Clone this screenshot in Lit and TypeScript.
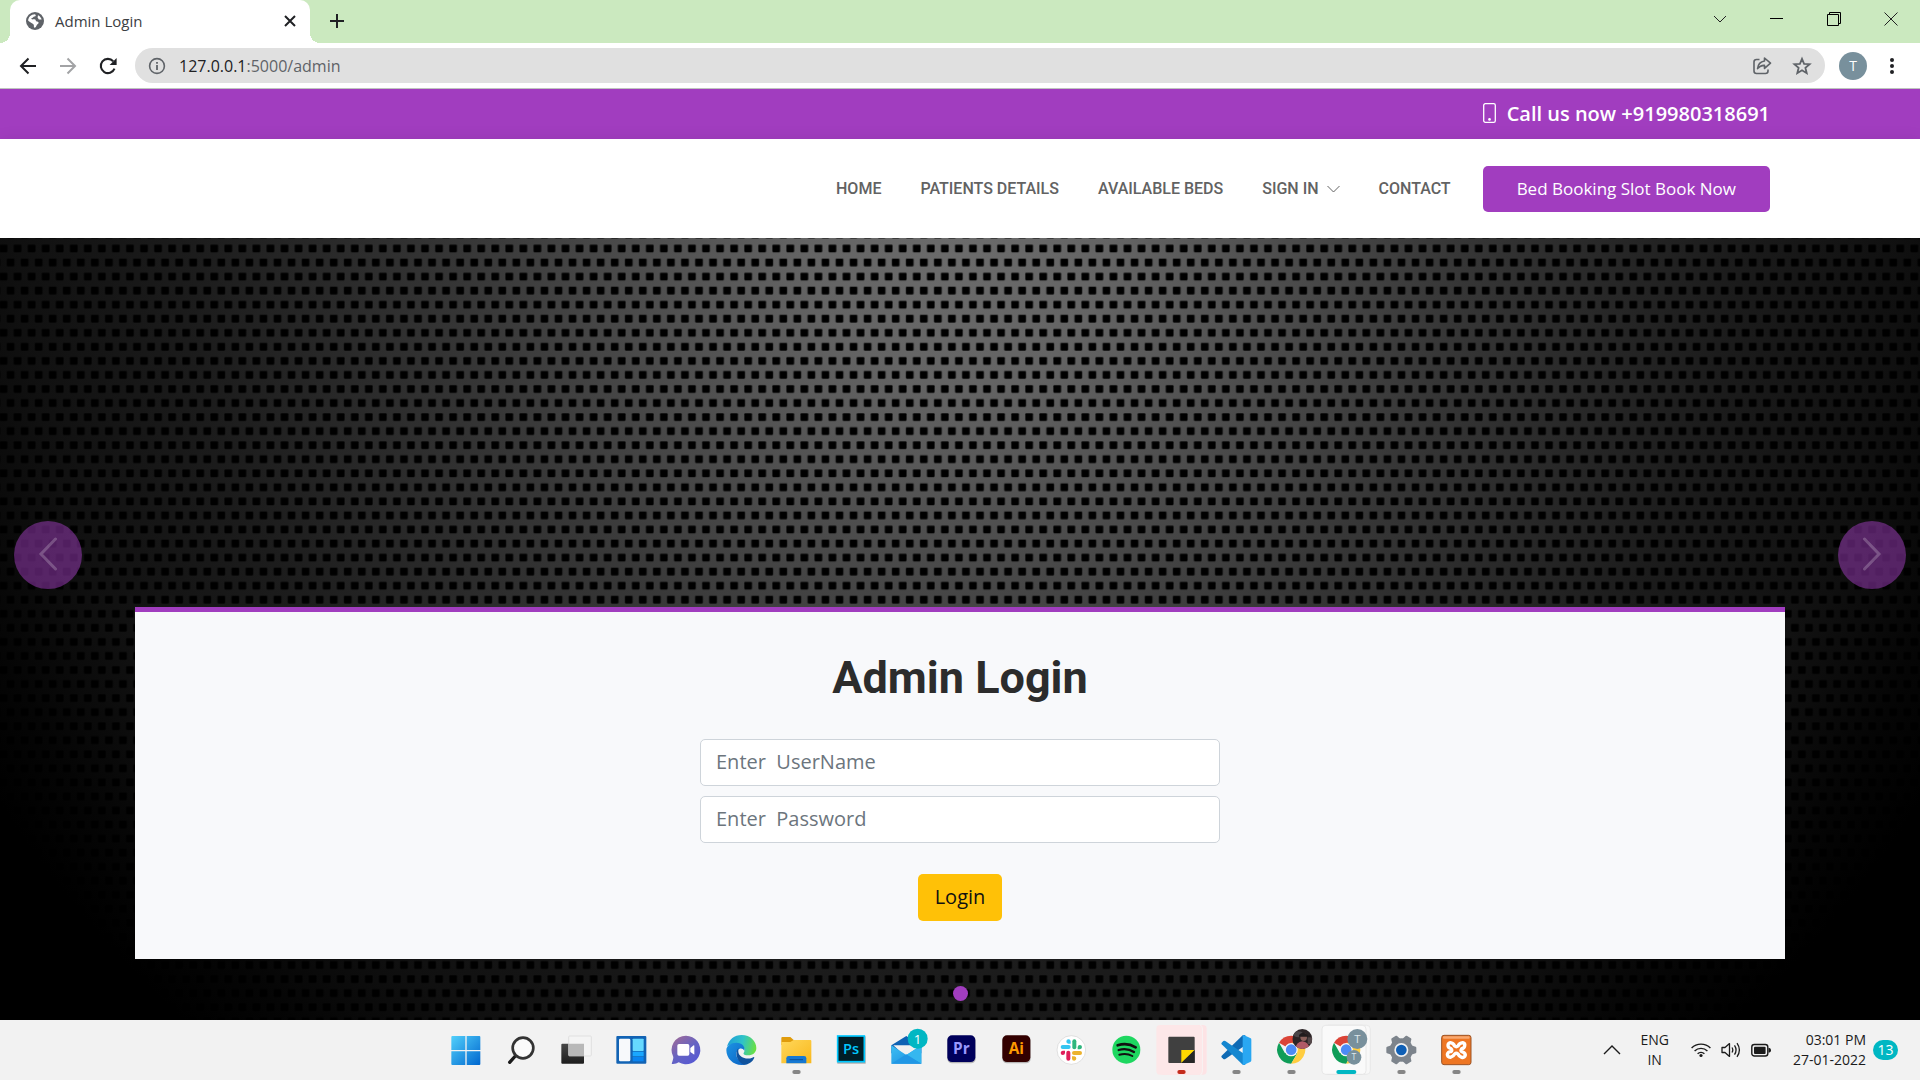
import { LitElement, html, css, svg, nothing } from "lit";
import { customElement, property } from "lit/decorators.js";

/* ---------- Browser chrome ---------- */

@customElement("browser-chrome")
class BrowserChrome extends LitElement {
  static styles = css`
    :host {
      display: block;
      font-family: "Open Sans", "Noto Sans", sans-serif;
      background: #fff;
      border-bottom: 1px solid #bfc3bf;
    }
    button {
      border: 0;
      padding: 0;
      background: none;
      display: grid;
      place-items: center;
      font: inherit;
    }
    svg {
      display: block;
    }
    .strip {
      display: flex;
      height: 43px;
      background: #cbe9bf;
      padding: 0 1px 0 10px;
    }
    .tab {
      position: relative;
      box-sizing: border-box;
      display: flex;
      align-items: center;
      width: 300px;
      padding: 0 11px 2px 16px;
      background: #fff;
      border-radius: 10px 10px 0 0;
      font-size: 15px;
      color: #3c4043;
    }
    .tab::before,
    .tab::after {
      content: "";
      position: absolute;
      bottom: 0;
      width: 10px;
      height: 10px;
    }
    .tab::before {
      left: -10px;
      background: radial-gradient(circle at 0 0, transparent 10px, #fff 10px);
    }
    .tab::after {
      right: -10px;
      background: radial-gradient(circle at 100% 0, transparent 10px, #fff 10px);
    }
    .title {
      flex: 1;
      padding-left: 11px;
    }
    .new {
      width: 54px;
      padding-bottom: 1px;
    }
    .window {
      display: flex;
      margin-left: auto;
    }
    .window button {
      width: 57px;
      height: 37px;
    }
    .toolbar {
      display: flex;
      align-items: center;
      height: 45px;
      padding: 0 13px 0 8px;
    }
    .nav {
      width: 40px;
      height: 40px;
    }
    .address {
      flex: 1;
      display: flex;
      align-items: center;
      height: 35px;
      margin: 0 14px 0 7px;
      padding: 0 12px;
      border-radius: 18px;
      background: #e0e0e0;
      font-size: 16px;
      color: #5f6368;
    }
    .address .url {
      flex: 1;
      padding-left: 12px;
    }
    .host {
      color: #202124;
    }
    .address button {
      width: 22px;
      margin-left: 18px;
    }
    .avatar {
      width: 28px;
      height: 28px;
      border-radius: 50%;
      background: #78909c;
      color: #fff;
      font-size: 14px;
    }
    .menu {
      width: 30px;
      margin-left: 10px;
    }
  `;

  render() {
    return html`
      <div class="strip">
        <div class="tab">
          <svg width="18" height="18" viewBox="0 0 18 18">
            <circle cx="9" cy="9" r="9" fill="#5f6368" />
            <path
              d="M9 2.2C10.2 3.200 10 4.300 8.400 4.500C7 4.700 7.400 6 6 6.100C5 6.200 5.200 7.300 6.200 7.400C8 7.300 9.600 7.200 9.800 8.600C10 10 12.600 9.200 12.600 10.800C12.600 12 11.200 11.900 10.700 13.200C10.300 14.300 9.600 15.700 8.400 15.700C7.400 15.300 8.300 13.500 7.600 12.600C6.800 11.500 4.600 10.800 2.200 8.800C2 5.400 5 2.300 9 2.200Z"
              fill="#fff"
            />
            <path d="M12 3.200C14 4.200 15.200 5.800 15.600 7.600L12.800 7.400L11.600 5.400Z" fill="#fff" />
          </svg>
          <span class="title">Admin Login</span>
          <button aria-label="Close tab">
            <svg width="18" height="18" viewBox="0 0 18 18" stroke="#202124" stroke-width="2">
              <path d="M4 4L14 14M14 4L4 14" />
            </svg>
          </button>
        </div>
        <button class="new" aria-label="New tab">
          <svg width="16" height="16" viewBox="0 0 16 16" stroke="#202124" stroke-width="2">
            <path d="M8 1V15M1 8H15" />
          </svg>
        </button>
        <div class="window">
          <button aria-label="Search tabs">
            <svg width="14" height="14" viewBox="0 0 14 14" fill="none" stroke="#222">
              <path d="M1 4L7 10L13 4" />
            </svg>
          </button>
          <button aria-label="Minimize">
            <svg width="14" height="14" viewBox="0 0 14 14" stroke="#000"><path d="M0 6.5H13" /></svg>
          </button>
          <button aria-label="Restore">
            <svg width="14" height="14" viewBox="0 0 14 14" fill="none" stroke="#000">
              <path d="M.5 2.5H11.5V13.5H.5ZM2.5 2.5V.5H13.5V11.5H11.5" />
            </svg>
          </button>
          <button aria-label="Close">
            <svg width="14" height="14" viewBox="0 0 14 14" stroke="#222">
              <path d="M.5 .5L13.5 13.5M13.5 .5L.5 13.5" />
            </svg>
          </button>
        </div>
      </div>
      <div class="toolbar">
        <button class="nav" aria-label="Back">
          <svg width="18" height="18" viewBox="0 0 18 18" fill="none" stroke="#202124" stroke-width="2">
            <path d="M17 9H2M9.5 1.5L2 9L9.5 16.5" />
          </svg>
        </button>
        <button class="nav" aria-label="Forward">
          <svg width="18" height="18" viewBox="0 0 18 18" fill="none" stroke="#a2a3a5" stroke-width="2">
            <path d="M1 9H16M8.5 1.5L16 9L8.5 16.5" />
          </svg>
        </button>
        <button class="nav" aria-label="Reload">
          <svg width="18" height="18" viewBox="0 0 18 18">
            <path d="M15.5 11.6A7.1 7.1 0 1 1 14.2 4.2" fill="none" stroke="#202124" stroke-width="2.1" />
            <path d="M17.6 1V8H10.6Z" fill="#202124" />
          </svg>
        </button>
        <div class="address">
          <svg width="20" height="20" viewBox="0 0 20 20">
            <circle cx="10" cy="10" r="7.4" fill="none" stroke="#5f6368" stroke-width="1.6" />
            <path d="M10 9V14M10 6V7.8" stroke="#5f6368" stroke-width="1.8" />
          </svg>
          <span class="url"><span class="host">127.0.0.1</span>:5000/admin</span>
          <button aria-label="Share">
            <svg width="20" height="20" viewBox="0 0 20 20" fill="none" stroke="#5f6368" stroke-width="1.6" stroke-linejoin="round">
              <path d="M7.5 3.5H4.5Q2 3.5 2 6V15Q2 17.5 4.5 17.5H13.5Q16 17.5 16 15V13.5" />
              <path d="M12.5 2L18.5 7.2L12.5 12.4V9.4C9.5 9.2 7.4 10.4 5.6 12.6C6 8.4 8.4 5.6 12.5 5Z" />
            </svg>
          </button>
          <button aria-label="Bookmark this page">
            <svg width="20" height="20" viewBox="0 0 20 20" fill="none" stroke="#5f6368" stroke-width="1.8">
              <path d="M10 2.8L12.1 7.8L17.6 8.2L13.4 11.8L14.7 17.2L10 14.3L5.3 17.2L6.6 11.8L2.4 8.2L7.9 7.8Z" />
            </svg>
          </button>
        </div>
        <button class="avatar" aria-label="Profile">T</button>
        <button class="menu" aria-label="Menu">
          <svg width="6" height="18" viewBox="0 0 6 18" fill="#202124">
            <circle cx="3" cy="3" r="2" /><circle cx="3" cy="9" r="2" /><circle cx="3" cy="15" r="2" />
          </svg>
        </button>
      </div>
    `;
  }
}

/* ---------- Hospital site ---------- */

@customElement("site-header")
class SiteHeader extends LitElement {
  static styles = css`
    :host {
      display: block;
      font-family: "Open Sans", sans-serif;
    }
    svg {
      display: block;
    }
    .topbar {
      box-sizing: border-box;
      display: flex;
      align-items: center;
      justify-content: flex-end;
      gap: 11px;
      height: 50px;
      padding: 0 150px 2px;
      background: #a13dbf;
      color: #fff;
      font-size: 20px;
      font-weight: 600;
    }
    .bar {
      position: relative;
      display: flex;
      align-items: center;
      justify-content: flex-end;
      gap: 32px;
      height: 99px;
      padding: 0 150px;
      background: #fff;
      box-shadow: 0 0 15px rgba(0, 0, 0, 0.08);
    }
    nav {
      display: flex;
      gap: 39px;
      font-family: Roboto, sans-serif;
      font-size: 16px;
      font-weight: 500;
    }
    nav a {
      display: flex;
      align-items: center;
      gap: 8px;
      color: #626262;
      text-decoration: none;
    }
    .book {
      padding: 0 34px;
      border-radius: 5px;
      background: #a13dbf;
      color: #fff;
      font-size: 17px;
      line-height: 46px;
      text-decoration: none;
    }
  `;

  render() {
    const links = ["HOME", "PATIENTS DETAILS", "AVAILABLE BEDS", "SIGN IN", "CONTACT"];
    return html`
      <div class="topbar">
        <svg width="13" height="20" viewBox="0 0 13 20">
          <rect x=".7" y=".7" width="11.6" height="18.6" rx="1.6" fill="none" stroke="#fff" stroke-width="1.3" />
          <circle cx="6.5" cy="16.4" r="1.3" fill="#fff" />
        </svg>
        <span>Call us now +919980318691</span>
      </div>
      <div class="bar">
        <nav>
          ${links.map(
            (label) => html`<a href="#"
              >${label}${label === "SIGN IN"
                ? html`<svg width="13" height="8" viewBox="0 0 13 8" fill="none" stroke="#626262">
                    <path d="M.5 1L6.5 7L12.5 1" />
                  </svg>`
                : nothing}</a
            >`
          )}
        </nav>
        <a class="book" href="#">Bed Booking Slot Book Now</a>
      </div>
    `;
  }
}

@customElement("login-hero")
class LoginHero extends LitElement {
  static styles = css`
    :host {
      position: relative;
      display: flex;
      flex-direction: column;
      justify-content: flex-end;
      font-family: "Open Sans", sans-serif;
      background: radial-gradient(
        57% 134% at 50% 0,
        #6b6b6b 0,
        #646464 14%,
        #4c4c4c 30%,
        #373737 45%,
        #1c1c1c 70%,
        #101010 86%,
        #050505 96%,
        #000 103%
      );
    }
    .mesh {
      position: absolute;
      inset: 0;
      width: 100%;
      height: 100%;
    }
    .arrow {
      position: absolute;
      top: 283px;
      width: 68px;
      height: 68px;
      padding: 0;
      border: 0;
      border-radius: 50%;
      background: rgba(161, 61, 191, 0.5);
      display: grid;
      place-items: center;
    }
    .prev {
      left: 14px;
    }
    .next {
      right: 14px;
    }
    .panel {
      position: relative;
      margin: 0 135px;
      padding: 39px 24px 38px;
      border-top: 5px solid #a13dbf;
      background: #f8f9fb;
    }
    form {
      display: flex;
      flex-direction: column;
      align-items: center;
      gap: 10px;
    }
    h1 {
      margin: 0 0 24px;
      font-family: Roboto, sans-serif;
      font-size: 45px;
      line-height: 54px;
      font-weight: 700;
      color: #2c2c2c;
      text-align: center;
    }
    input {
      box-sizing: border-box;
      width: 520px;
      max-width: 100%;
      height: 47px;
      padding: 0 15px 2px;
      border: 1px solid #ced4da;
      border-radius: 5px;
      background: #fff;
      font: inherit;
      font-size: 20px;
    }
    input::placeholder {
      color: #6c757d;
      opacity: 1;
    }
    .submit {
      height: 47px;
      margin-top: 21px;
      padding: 0 17px 2px;
      border: 0;
      border-radius: 5px;
      background: #ffc107;
      color: #111;
      font: inherit;
      font-size: 20px;
    }
    .dots {
      position: relative;
      display: flex;
      justify-content: center;
      padding: 27px 0 19px;
    }
    .dot {
      width: 15px;
      height: 15px;
      padding: 0;
      border: 0;
      border-radius: 50%;
      background: #a13dbf;
    }
  `;

  render() {
    return html`
      <svg class="mesh">
        <defs>
          <pattern id="holes" patternUnits="userSpaceOnUse" x="-3.5" y="3.5" width="14.05" height="28.1">
            <g stroke="#000" stroke-opacity=".4" stroke-width="1.2">
              <rect x="3.4" y="3.4" width="7.2" height="7.2" rx=".8" />
              <rect x="-3.6" y="17.4" width="7.2" height="7.2" rx=".8" />
              <rect x="10.45" y="17.4" width="7.2" height="7.2" rx=".8" />
            </g>
          </pattern>
        </defs>
        <rect width="100%" height="100%" fill="url(#holes)" />
      </svg>
      <button class="arrow prev" aria-label="Previous">
        <svg width="20" height="36" viewBox="0 0 20 36" fill="none" stroke="rgba(255,255,255,.22)" stroke-width="3" stroke-linecap="round">
          <path d="M17.500 2L3 17L17.500 32" />
        </svg>
      </button>
      <button class="arrow next" aria-label="Next">
        <svg width="20" height="36" viewBox="0 0 20 36" fill="none" stroke="rgba(255,255,255,.22)" stroke-width="3" stroke-linecap="round">
          <path d="M2.500 2L17 17L2.500 32" />
        </svg>
      </button>
      <section class="panel">
        <form>
          <h1>Admin Login</h1>
          <input type="text" aria-label="User name" placeholder="Enter  UserName" />
          <input type="password" aria-label="Password" placeholder="Enter  Password" />
          <button class="submit" type="button">Login</button>
        </form>
      </section>
      <div class="dots"><button class="dot" aria-label="Slide 1"></button></div>
    `;
  }
}

/* ---------- Taskbar ---------- */

/* Icons are drawn on a 165 x 180 grid: one taskbar slot at three units per pixel. */

const chrome = svg`
  <path d="M84.500 89L48.100 68A42 42 0 0 1 120.900 68Z" fill="#db4437" />
  <path d="M48.100 68A42 42 0 0 0 84.500 131L103 99.500L84.500 89L66 99.500Z" fill="#0f9d58" />
  <path d="M120.900 68A42 42 0 0 1 84.500 131L103 99.500L84.500 68Z" fill="#ffcd40" />
  <circle cx="84.500" cy="89" r="20" fill="#f6f6f6" />
  <circle cx="84.500" cy="89" r="16" fill="#4c8bf5" />`;

const teeth = [0, 60, 120, 180, 240, 300];

const icons = [
  {
    name: "Start",
    art: svg`
      <linearGradient id="win" x1="40" y1="48" x2="127" y2="134" gradientUnits="userSpaceOnUse">
        <stop stop-color="#52d0fb" /><stop offset="1" stop-color="#0067cf" />
      </linearGradient>
      <path d="M43 48H82V90H40V51Q40 48 43 48ZM86 48H124Q127 48 127 51V90H86ZM40 94H82V135H43Q40 135 40 132ZM86 94H127V132Q127 135 124 135H86Z" fill="url(#win)" />`,
  },
  {
    name: "Search",
    art: svg`
      <path d="M67 108L50 127" stroke="#1b1b1b" stroke-width="10" stroke-linecap="round" />
      <circle cx="90" cy="84" r="31" fill="#fafafa" stroke="#333" stroke-width="8" />`,
  },
  {
    name: "Task view",
    art: svg`
      <linearGradient id="tv" x1="0" y1="0" x2="0" y2="1"><stop stop-color="#474747" /><stop offset="1" stop-color="#1d1d1d" /></linearGradient>
      <rect x="40" y="71" width="68" height="60" rx="3" fill="url(#tv)" />
      <rect x="62" y="48" width="68" height="60" rx="3" fill="#f4f4f4" stroke="#d8d8d8" stroke-width="2" />
      <path d="M62 71H108V108H65Q62 108 62 105Z" fill="#b8b8b8" />`,
  },
  {
    name: "Widgets",
    art: svg`
      <rect x="40" y="48" width="90" height="83" rx="3" fill="#1263b4" />
      <rect x="48" y="56" width="34" height="68" rx="4" fill="#f7f9fb" />
      <rect x="89" y="56" width="33" height="37" rx="2" fill="#66d9ff" />
      <rect x="89" y="95" width="33" height="14" fill="#1aa7ff" />
      <rect x="89" y="111" width="33" height="13" fill="#0a84f0" />`,
  },
  {
    name: "Chat",
    art: svg`
      <linearGradient id="chat" x1=".1" y1=".1" x2=".8" y2="1"><stop stop-color="#9a6a9c" /><stop offset=".5" stop-color="#6563c3" /><stop offset="1" stop-color="#5558d4" /></linearGradient>
      <path d="M84 47A43 43 0 1 1 62 127Q54 133 42 132Q40 130 43 125Q46 119 46 111A43 43 0 0 1 84 47Z" fill="url(#chat)" />
      <rect x="58" y="72" width="36" height="35" rx="5" fill="#fff" />
      <path d="M97 84L107 76Q109 75 109 78V102Q109 105 107 103L97 96Z" fill="#fff" />`,
  },
  {
    name: "Edge",
    art: svg`
      <linearGradient id="edgeTop" x1="45" y1="60" x2="130" y2="80" gradientUnits="userSpaceOnUse"><stop stop-color="#1f9fd8" /><stop offset=".5" stop-color="#2fc3c8" /><stop offset="1" stop-color="#6be13f" /></linearGradient>
      <linearGradient id="edgeLow" x1="40" y1="80" x2="100" y2="135" gradientUnits="userSpaceOnUse"><stop stop-color="#1b8fe0" /><stop offset="1" stop-color="#0b62c4" /></linearGradient>
      <path d="M42 80C48 58 64 45 86 45C112 45 130 64 130 84C130 98 119 106 106 106C96 106 90 103 92 99C97 92 95 80 84 76C68 70 48 72 42 80Z" fill="url(#edgeTop)" />
      <path d="M40 90C40 78 54 68 70 68C88 68 97 80 94 92C86 78 70 88 70 102C70 120 88 132 104 132C98 134 92 135 86 135C60 135 40 115 40 90Z" fill="url(#edgeLow)" />
      <path d="M76 84C66 96 68 122 92 134C108 133 118 126 124 113C124 110 121 111 118 113C100 120 78 112 76 96Z" fill="#10539e" />`,
  },
  {
    name: "File Explorer",
    mark: "#868686",
    art: svg`
      <linearGradient id="folder" x1="0" y1="0" x2="1" y2="1"><stop stop-color="#ffd75a" /><stop offset="1" stop-color="#f9b81c" /></linearGradient>
      <path d="M40 54Q40 51 43 51H67L77 60H90V75H40Z" fill="#e09c0c" />
      <path d="M40 66H67L77 60H127Q130 60 130 63V130H40Z" fill="url(#folder)" />
      <path d="M55 130V115Q55 108 62 108H108Q115 108 115 115V130Z" fill="#1678d2" />
      <path d="M65 119H105" stroke="#0b4f96" stroke-width="3" />`,
  },
  {
    name: "Photoshop",
    art: svg`
      <rect x="43" y="49" width="85" height="82" fill="#000" opacity=".3" />
      <rect x="44" y="48" width="80" height="77" fill="#001d26" stroke="#00c8ff" stroke-width="5" />
      <text x="84" y="102" font-size="44" font-weight="600" text-anchor="middle" fill="#00c8ff">Ps</text>`,
  },
  {
    name: "Mail",
    art: svg`
      <linearGradient id="mail" x1="0" y1="0" x2="1" y2="1"><stop stop-color="#3ec0f4" /><stop offset="1" stop-color="#1a8ade" /></linearGradient>
      <path d="M40 76L85 48L130 76V100H40Z" fill="#0f62b4" />
      <path d="M46 76H124V96L85 112Z" fill="#f1f1f1" />
      <path d="M40 76L85 105L130 76V131H40Z" fill="url(#mail)" />
      <path d="M85 105L130 76V131Z" fill="#35b7ef" />
      <path d="M40 131L85 103L130 131Z" fill="#2197e5" />
      <circle cx="119" cy="56" r="30" fill="#00b7c3" />
      <text x="119" y="71" font-size="40" text-anchor="middle" fill="#fff">1</text>`,
  },
  {
    name: "Premiere Pro",
    art: svg`
      <rect x="43" y="48" width="85" height="82" rx="14" fill="#000" opacity=".25" />
      <rect x="43" y="46" width="84" height="80" rx="14" fill="#00005b" />
      <text x="85" y="102" font-size="46" font-weight="700" text-anchor="middle" fill="#9999ff">Pr</text>`,
  },
  {
    name: "Illustrator",
    art: svg`
      <rect x="43" y="48" width="85" height="82" rx="14" fill="#000" opacity=".25" />
      <rect x="43" y="46" width="84" height="80" rx="14" fill="#330000" />
      <text x="85" y="102" font-size="46" font-weight="700" text-anchor="middle" fill="#ff9a00">Ai</text>`,
  },
  {
    name: "Slack",
    art: svg`
      <circle cx="85" cy="90" r="43" fill="#fff" stroke="#d2d2d2" stroke-width="2" />
      ${[
        ["#36c5f0", 0],
        ["#2eb67d", 90],
        ["#ecb22e", 180],
        ["#e01e5a", 270],
      ].map(
        ([fill, turn]) => svg`
        <g transform="rotate(${turn} 85 90)" fill="${fill}">
          <rect x="53" y="75" width="30" height="12" rx="6" />
          <path d="M83 71H76A6.500 6.500 0 1 1 83 64Z" />
        </g>`
      )}`,
  },
  {
    name: "Spotify",
    art: svg`
      <circle cx="85" cy="89" r="42" fill="#1ed760" />
      <g fill="none" stroke="#111" stroke-linecap="round">
        <path d="M59 76Q88 67 113 82" stroke-width="8" />
        <path d="M62 90Q87 83 108 96" stroke-width="7" />
        <path d="M64 104Q86 98 103 108" stroke-width="6" />
      </g>`,
  },
  {
    name: "Sticky Notes",
    mark: "#c42b1c",
    art: svg`
      <rect x="20" y="15" width="141" height="149" rx="11" fill="#fde3e5" />
      <path d="M141 15Q148 18 148 26V153Q148 161 141 164" fill="none" stroke="#f8f1f1" stroke-width="4" />
      <rect x="10" y="15" width="136" height="149" rx="11" fill="#fde7e8" />
      <rect x="46" y="50" width="79" height="79" rx="3" fill="#404040" />
      <path d="M85 90H125L85 129Z" fill="#ffd800" />
      <path d="M125 90V129H85Z" fill="#262626" />`,
  },
  {
    name: "Visual Studio Code",
    mark: "#868686",
    art: svg`
      <path d="M108 45L112 46V76L52 117Q49 119 46 117L41 112Q39 109 41 107L104 46Z" fill="#0f6ab4" />
      <path d="M108 135L112 134V104L52 63Q49 61 46 63L41 68Q39 71 41 73L104 134Z" fill="#1587d0" />
      <path d="M107 45L128 55Q130 56 130 59V121Q130 124 128 125L107 135Q104 135 104 131V49Q104 45 107 45Z" fill="#29a7f2" />`,
  },
  {
    name: "Chrome, first profile",
    mark: "#868686",
    art: svg`
      ${chrome}
      <clipPath id="face"><circle cx="118" cy="57" r="30" /></clipPath>
      <g clip-path="url(#face)">
        <rect x="88" y="27" width="60" height="60" fill="#2c2426" />
        <ellipse cx="106" cy="43" rx="14" ry="9" fill="#4a4548" />
        <ellipse cx="122" cy="51" rx="10" ry="12" fill="#8a5f5a" />
        <path d="M108 45Q120 32 134 45V50H108Z" fill="#211b1d" />
        <path d="M97 90Q98 66 118 64Q138 66 141 90Z" fill="#b05a66" />
        <rect x="134" y="52" width="14" height="20" fill="#55484a" />
      </g>`,
  },
  {
    name: "Chrome, second profile",
    mark: "#00b7c3",
    wide: true,
    art: svg`
      <rect x="20" y="16" width="137" height="147" rx="11" fill="#f8f8f8" stroke="#e2e2e2" stroke-width="2" />
      <rect x="12" y="16" width="132" height="147" rx="11" fill="#fafafa" stroke="#e0e0e0" stroke-width="2" />
      ${chrome}
      <circle cx="118" cy="57" r="30" fill="#78909c" />
      <text x="118" y="69" font-size="34" text-anchor="middle" fill="#dfe7ea">T</text>
      <circle cx="108" cy="112" r="22" fill="#78909c" />
      <text x="108" y="121" font-size="26" text-anchor="middle" fill="#dfe7ea">T</text>`,
  },
  {
    name: "Settings",
    mark: "#868686",
    art: svg`
      <g fill="#7d848c">
        <circle cx="85" cy="90" r="35" />
        ${teeth.map((t) => svg`<path transform="rotate(${t} 85 90)" d="M112 75L128 80Q130 81 130 83V97Q130 99 128 100L112 105Z" />`)}
      </g>
      <circle cx="85" cy="90" r="21" fill="#f0f0f0" />
      <circle cx="85" cy="90" r="16" fill="#0f5fb5" />`,
  },
  {
    name: "XAMPP",
    mark: "#868686",
    art: svg`
      <rect x="41" y="46" width="88" height="88" rx="7" fill="#ee7623" stroke="#9c5426" stroke-width="3" />
      <rect x="45" y="49" width="80" height="7" rx="3" fill="#f8a870" />
      <g fill="none" stroke="#fff" stroke-width="10" stroke-linejoin="round">
        <path d="M67 68Q76 69 80 78Q85 82 90 78Q94 69 104 68Q112 70 110 78Q109 85 101 86Q97 91 101 95Q111 97 112 105Q110 114 101 112Q93 109 90 102Q85 98 80 102Q76 110 67 112Q58 111 58 103Q60 95 69 95Q74 91 69 86Q59 83 60 75Q61 69 67 68Z" />
      </g>`,
  },
];

@customElement("task-bar")
class TaskBar extends LitElement {
  static styles = css`
    :host {
      display: grid;
      grid-template-columns: 1fr auto 1fr;
      height: 60px;
      background: #f2f2f2;
      font-family: "Open Sans", "Noto Sans", sans-serif;
      font-size: 14px;
      line-height: 20px;
      color: #1b1b1b;
    }
    svg {
      display: block;
    }
    button {
      border: 0;
      padding: 0;
      background: none;
      font: inherit;
      color: inherit;
    }
    .apps {
      grid-column: 2;
      display: flex;
    }
    .tray {
      display: flex;
      align-items: center;
      justify-content: flex-end;
      padding-right: 22px;
    }
    .lang {
      margin: 0 22px 0 19px;
      text-align: center;
    }
    .status {
      display: flex;
      gap: 10px;
    }
    .clock {
      margin: 0 7px 0 22px;
      text-align: right;
    }
    .count {
      width: 25px;
      border-radius: 10px;
      background: #00b7c3;
      color: #fff;
    }
  `;

  @property({ attribute: false }) apps: any[] = icons;

  render() {
    return html`
      <div class="apps">
        ${this.apps.map(
          (app) => html`<button aria-label=${app.name}>
            <svg width="55" height="60" viewBox="0 0 165 180">
              ${app.art}
              ${app.mark
                ? svg`<rect x=${app.wide ? 55 : 73} y="150" width=${app.wide ? 60 : 25} height="12" rx="6" fill=${app.mark} />`
                : nothing}
            </svg>
          </button>`
        )}
      </div>
      <div class="tray">
        <button aria-label="Hidden icons">
          <svg width="18" height="12" viewBox="0 0 18 12" fill="none" stroke="#1b1b1b" stroke-width="1.400">
            <path d="M1 10L9 2L17 10" />
          </svg>
        </button>
        <button class="lang">ENG<br />IN</button>
        <div class="status">
          <svg width="20" height="20" viewBox="0 0 20 20" fill="none" stroke="#1b1b1b" stroke-width="1.400">
            <path d="M.6 8A13.300 13.300 0 0 1 19.400 8M3.600 11A9 9 0 0 1 16.400 11M6.600 13.800A5 5 0 0 1 13.400 13.800" />
            <circle cx="10" cy="15.500" r="1.600" fill="#1b1b1b" stroke="none" />
          </svg>
          <svg width="20" height="20" viewBox="0 0 20 20" fill="none" stroke="#1b1b1b" stroke-width="1.300" stroke-linejoin="round">
            <path d="M1 7.500H4L8.500 3.600V16.400L4 12.500H1Z" />
            <path d="M11 7.500Q12.600 10 11 12.500M13.500 5.300Q16.600 10 13.500 14.700M16 3.200Q20.800 10 16 16.800" />
          </svg>
          <svg width="20" height="20" viewBox="0 0 20 20">
            <rect x=".8" y="4.500" width="16" height="11.500" rx="2.500" fill="none" stroke="#1b1b1b" stroke-width="1.400" />
            <rect x="3" y="6.700" width="11.600" height="7.200" rx="1" fill="#1b1b1b" />
            <path d="M17.500 8H18.500Q20 8.500 20 10.200Q20 12 18.500 12.500H17.500Z" fill="#1b1b1b" />
          </svg>
        </div>
        <button class="clock">03:01 PM<br />27-01-2022</button>
        <button class="count" aria-label="Notifications">13</button>
      </div>
    `;
  }
}

/* ---------- Page ---------- */

@customElement("app-root")
class AppRoot extends LitElement {
  static styles = css`
    :host {
      display: flex;
      flex-direction: column;
      min-height: 100vh;
    }
    .hero {
      flex: 1;
    }
  `;

  render() {
    return html`
      <browser-chrome></browser-chrome>
      <site-header></site-header>
      <login-hero class="hero"></login-hero>
      <task-bar></task-bar>
    `;
  }
}
